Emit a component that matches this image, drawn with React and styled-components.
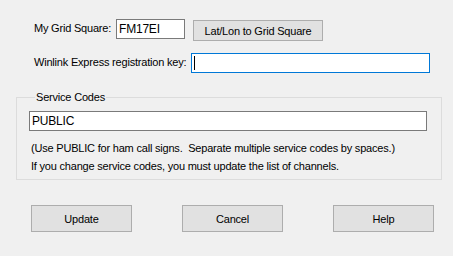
import React from 'react';
import styled, { createGlobalStyle } from 'styled-components';

const Global = createGlobalStyle`
    html, body {
        margin: 0;
        padding: 0;
        background: #f0f0f0;
    }
    * {
        box-sizing: border-box;
    }
`;

const Dialog = styled.div`
    width: 453px;
    height: 256px;
    background: #f0f0f0;
    font-family: "Liberation Sans", Arial, sans-serif;
    font-size: 11px;
    letter-spacing: -0.2px;
    color: #000;
    padding: 19px 11px 0 16px;
    display: flex;
    flex-direction: column;
`;

const Row = styled.div`
    display: flex;
    align-items: flex-start;
    padding-left: ${p => p.$indent || 18}px;
    margin-bottom: ${p => p.$gap || 0}px;
`;

const Label = styled.span`
    margin-top: ${p => p.$top || 3}px;
    width: ${p => (p.$width ? p.$width + 'px' : 'auto')};
    white-space: nowrap;
`;

const TextBox = styled.div`
    width: ${p => p.$width}px;
    height: 20px;
    background: #fff;
    border: 1px solid ${p => (p.$focus ? '#0078d7' : '#7a7a7a')};
    padding: 2px 2px;
    line-height: 14px;
    font-size: 12px;
    display: flex;
    align-items: center;
    margin-left: ${p => p.$left || 0}px;
`;

const Caret = styled.span`
    width: 1px;
    height: 14px;
    background: #000;
`;

const Button = styled.button`
    font: inherit;
    letter-spacing: inherit;
    color: #000;
    background: #e1e1e1;
    border: 1px solid #adadad;
    border-radius: 0;
    padding: 0;
    width: ${p => p.$width}px;
    height: ${p => p.$height}px;
    margin-left: ${p => p.$left || 0}px;
    margin-top: ${p => p.$top || 0}px;
`;

const Group = styled.fieldset`
    margin: 0;
    margin-top: 17px;
    width: 426px;
    height: 90px;
    border: 1px solid #dcdcdc;
    padding: 7px 14px 0 12px;
`;

const Legend = styled.legend`
    padding: 0 1px;
    margin-left: 6px;
    line-height: 14px;
`;

const Note = styled.div`
    line-height: 18px;
    padding-left: 2px;
    white-space: nowrap;
    margin-top: ${p => p.$top || 0}px;
`;

const Buttons = styled.div`
    display: flex;
    gap: 50px;
    padding-left: 15px;
    margin-top: 25px;
`;

export default function App() {
    return (
        <>
            <Global />
            <Dialog>
                <Row $gap={12}>
                    <Label $width={82}>My Grid Square:</Label>
                    <TextBox $width={69}>FM17EI</TextBox>
                    <Button $width={130} $height={21} $left={8} $top={1}>
                        Lat/Lon to Grid Square
                    </Button>
                </Row>
                <Row>
                    <Label $width={157}>Winlink Express registration key:</Label>
                    <TextBox $width={239} $focus>
                        <Caret />
                    </TextBox>
                </Row>
                <Group>
                    <Legend>Service Codes</Legend>
                    <TextBox $width={398}>PUBLIC</TextBox>
                    <Note $top={8}>
                        (Use PUBLIC for ham call signs.&nbsp; Separate multiple service codes by spaces.)
                    </Note>
                    <Note>If you change service codes, you must update the list of channels.</Note>
                </Group>
                <Buttons>
                    <Button $width={101} $height={27}>Update</Button>
                    <Button $width={101} $height={27}>Cancel</Button>
                    <Button $width={101} $height={27}>Help</Button>
                </Buttons>
            </Dialog>
        </>
    );
}
